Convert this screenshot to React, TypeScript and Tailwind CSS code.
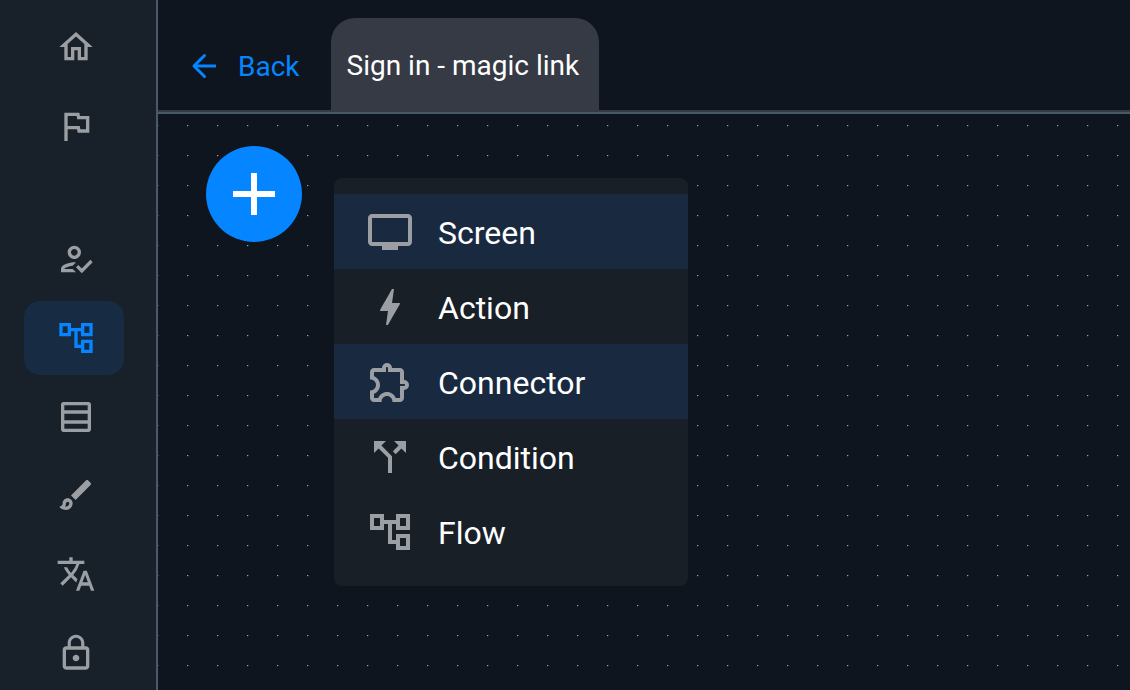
import { useState } from 'react';
import type { IconType } from 'react-icons';
import {
  MdAdd,
  MdBolt,
  MdCallSplit,
  MdLockOutline,
  MdOutlineAccountTree,
  MdOutlineBrush,
  MdOutlineExtension,
  MdOutlineFlag,
  MdOutlineHome,
  MdOutlineHowToReg,
  MdOutlineTv,
  MdTranslate,
} from 'react-icons/md';

type Icon = IconType | ((props: { className?: string }) => React.ReactNode);

interface NavItem { id: string; label: string; icon: Icon }
interface NodeType { id: string; label: string; icon: Icon }

function RowsIcon({ className }: { className?: string }) {
  return (
    <svg viewBox="0 0 24 24" fill="currentColor" className={className} aria-hidden="true">
      <path fillRule="evenodd" d="M4.5 3h15c.83 0 1.5.67 1.5 1.5v15c0 .83-.67 1.5-1.5 1.5h-15c-.83 0-1.5-.67-1.5-1.5v-15C3 3.67 3.67 3 4.5 3zM5 5v3h14V5zm0 5v4h14v-4zm0 6v3h14v-3z" />
    </svg>
  );
}

function BackIcon() {
  return (
    <svg viewBox="0 0 36 36" fill="none" stroke="currentColor" strokeWidth="3" className="size-9" aria-hidden="true">
      <path d="M30 18H8" />
      <path d="M18.5 7.5 8 18l10.500 10.500" strokeLinecap="round" strokeLinejoin="round" />
    </svg>
  );
}

const TOP_NAV: NavItem[] = [
  { id: 'home', label: 'Home', icon: MdOutlineHome },
  { id: 'start', label: 'Getting started', icon: MdOutlineFlag },
];

const MAIN_NAV: NavItem[] = [
  { id: 'users', label: 'Users', icon: MdOutlineHowToReg },
  { id: 'flows', label: 'Flows', icon: MdOutlineAccountTree },
  { id: 'data', label: 'Data', icon: RowsIcon },
  { id: 'styles', label: 'Styles', icon: MdOutlineBrush },
  { id: 'localization', label: 'Localization', icon: MdTranslate },
  { id: 'security', label: 'Security', icon: MdLockOutline },
];

const NODE_TYPES: NodeType[] = [
  { id: 'screen', label: 'Screen', icon: MdOutlineTv },
  { id: 'action', label: 'Action', icon: MdBolt },
  { id: 'connector', label: 'Connector', icon: MdOutlineExtension },
  { id: 'condition', label: 'Condition', icon: MdCallSplit },
  { id: 'flow', label: 'Flow', icon: MdOutlineAccountTree },
];

const HIGHLIGHTED = ['screen', 'connector'];

function NavButton({ item, active, onClick }: { item: NavItem; active: boolean; onClick: () => void }) {
  const Glyph = item.icon;
  return (
    <button
      type="button"
      aria-label={item.label}
      aria-current={active ? 'page' : undefined}
      onClick={onClick}
      className={`flex h-[74px] w-[100px] items-center justify-center rounded-2xl pl-1 ${active ? 'bg-[#172b43] text-[#0585ff]' : 'text-[#9b9fa3]'}`}
    >
      <Glyph className="size-10" />
    </button>
  );
}

function Sidebar() {
  const [active, setActive] = useState('flows');
  return (
    <nav className="flex shrink-0 flex-col border-r-2 border-[#4a5967] bg-[#182029] pt-[10px] pr-8 pl-6">
      <div className="flex flex-col gap-[5px]">
        {TOP_NAV.map(n => <NavButton key={n.id} item={n} active={n.id === active} onClick={() => setActive(n.id)} />)}
      </div>
      <div className="mt-[59px] flex flex-1 flex-col justify-between">
        {MAIN_NAV.map(n => <NavButton key={n.id} item={n} active={n.id === active} onClick={() => setActive(n.id)} />)}
      </div>
    </nav>
  );
}

function Header() {
  return (
    <header className="border-b-2 border-[#4a5967]">
      <div className="flex items-end border-b-2 border-[#353a44] pt-[18px] pl-7">
        <a href="#flows" className="flex h-[88px] items-center gap-4 text-[28px] text-[#0585ff]">
          <BackIcon />
          <span className="pt-0.5">Back</span>
        </a>
        <button type="button" className="ml-[31px] h-[92px] rounded-t-3xl bg-[#353a44] pt-1 pr-5 pl-4 text-[28px] text-white">
          Sign in - magic link
        </button>
      </div>
    </header>
  );
}

function DotGrid() {
  return (
    <svg className="absolute inset-0 size-full" aria-hidden="true">
      <defs>
        <pattern id="dots" x="29" y="11" width="30" height="30" patternUnits="userSpaceOnUse">
          <rect width="1" height="1" fill="#9aa1a8" />
          <rect x="1" width="1" height="1" fill="#39424b" />
          <rect y="1" width="1" height="1" fill="#28313a" />
        </pattern>
      </defs>
      <rect width="100%" height="100%" fill="url(#dots)" />
    </svg>
  );
}

function NodeMenu() {
  return (
    <ul role="menu" className="mt-8 w-[354px] rounded-lg bg-[#181f27] pt-4 pb-[17px]">
      {NODE_TYPES.map(({ id, label, icon: Glyph }) => (
        <li key={id} role="none">
          <button
            type="button"
            role="menuitem"
            className={`flex h-[75px] w-full items-center gap-6 px-8 text-[32px] text-white ${HIGHLIGHTED.includes(id) ? 'bg-[#192a40]' : ''}`}
          >
            <Glyph className="size-12 text-[#9b9fa3]" />
            <span className="pt-[3px]">{label}</span>
          </button>
        </li>
      ))}
    </ul>
  );
}

export default function App() {
  const [open, setOpen] = useState(true);
  return (
    <div className="flex min-h-screen bg-[#0e151f] font-['Roboto',sans-serif]">
      <Sidebar />
      <div className="flex min-w-0 flex-1 flex-col">
        <Header />
        <main className="relative flex-1 px-12 pt-8">
          <DotGrid />
          <div className="relative flex items-start gap-8">
            <button
              type="button"
              aria-label="Add node"
              aria-expanded={open}
              onClick={() => setOpen(o => !o)}
              className="flex size-24 shrink-0 items-center justify-center rounded-full bg-[#0585ff] text-white"
            >
              <MdAdd className="size-[72px]" />
            </button>
            {open && <NodeMenu />}
          </div>
        </main>
      </div>
    </div>
  );
}
